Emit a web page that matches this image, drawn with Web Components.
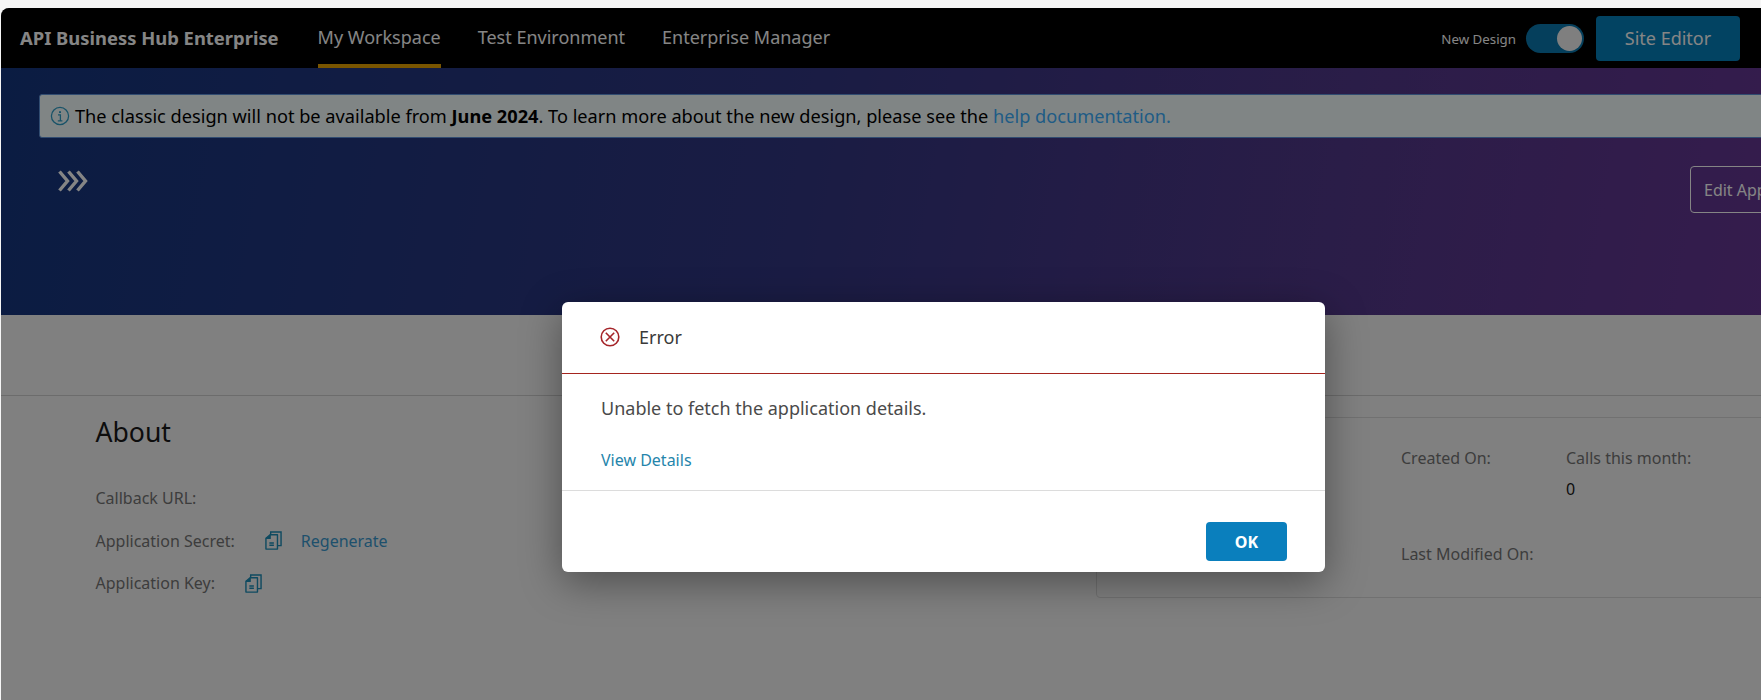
<!DOCTYPE html>
<html>
<head>
<meta charset="utf-8">
<title>API Business Hub Enterprise</title>
<style>
  html, body { margin: 0; height: 100%; overflow: hidden; background: #f6f6f6; }
  body { font-family: "Noto Sans", "Liberation Sans", sans-serif; }
</style>
</head>
<body>
<hub-app>
  <hub-header slot="header"></hub-header>
  <hub-hero slot="hero"></hub-hero>
  <hub-details slot="details"></hub-details>
  <error-dialog slot="dialog" title="Error" message="Unable to fetch the application details."></error-dialog>
</hub-app>

<script>
const COPY_ICON = `
  <svg viewBox="0 0 18 20" width="17" height="19" fill="none" stroke="currentColor" stroke-width="1.5" aria-hidden="true">
    <path d="M6 3.6V1h11v14.4h-3.4"/>
    <path d="M5.4 3.9h7.8v15.2H1V7.6z" stroke-linejoin="round"/>
    <path d="M5.4 3.9v3.7H1" fill="currentColor"/>
    <path d="M4.6 12.6h4.8M4.6 15h4.8"/>
  </svg>`;

class HubApp extends HTMLElement {
  constructor() {
    super();
    this.attachShadow({ mode: "open" });
  }

  connectedCallback() {
    this.shadowRoot.innerHTML = `
      <style>
        :host {
          display: block;
          margin: 8px 0 0 1px;
          height: 692px;
          position: relative;
          overflow: hidden;
          border-top-left-radius: 8px;
          background: #f6f6f6;
        }
        .shade {
          position: absolute;
          inset: 0;
          background: rgba(0,0,0,0.48);
        }
      </style>
      <slot name="header"></slot>
      <slot name="hero"></slot>
      <slot name="details"></slot>
      <div class="shade"></div>
      <slot name="dialog"></slot>
    `;
  }
}

class HubHeader extends HTMLElement {
  constructor() {
    super();
    this.attachShadow({ mode: "open" });
  }

  connectedCallback() {
    this.shadowRoot.innerHTML = `
      <style>
        :host {
          display: flex;
          align-items: stretch;
          height: 60px;
          background: #000;
          color: #fff;
          padding-left: 19px;
          padding-right: 21px;
          font-size: 18px;
        }
        .brand {
          font-weight: 700;
          font-size: 18.4px;
          align-self: center;
          margin-right: 39px;
          margin-top: -2px;
          color: #fff;
        }
        nav { display: flex; gap: 37px; }
        nav a {
          display: flex;
          align-items: center;
          padding-top: 2px;
          box-sizing: border-box;
          border-bottom: 4px solid transparent;
          color: #fff;
        }
        nav a.active { border-bottom-color: #e8a400; }
        .tools {
          margin-left: auto;
          display: flex;
          align-items: center;
        }
        .label { font-size: 13.3px; margin-right: 10px; margin-top: 1px; }
        .toggle {
          width: 58px;
          height: 29px;
          border-radius: 15px;
          background: #0a7ab0;
          position: relative;
          margin-right: 12px;
        }
        .toggle::after {
          content: "";
          position: absolute;
          top: 2px;
          right: 2px;
          width: 25px;
          height: 25px;
          border-radius: 50%;
          background: #f4f4f4;
        }
        .site {
          width: 144px;
          height: 45px;
          border: 0;
          border-radius: 4px;
          background: #0580bc;
          color: #fff;
          font: inherit;
          font-size: 18px;
        }
      </style>
      <div class="brand">API Business Hub Enterprise</div>
      <nav>
        <a class="active">My Workspace</a>
        <a>Test Environment</a>
        <a>Enterprise Manager</a>
      </nav>
      <div class="tools">
        <span class="label">New Design</span>
        <span class="toggle"></span>
        <button class="site">Site Editor</button>
      </div>
    `;
  }
}

class HubHero extends HTMLElement {
  constructor() {
    super();
    this.attachShadow({ mode: "open" });
  }

  connectedCallback() {
    this.shadowRoot.innerHTML = `
      <style>
        :host {
          display: block;
          height: 247px;
          box-sizing: border-box;
          width: 1900px;
          padding: 26px 0 0 38px;
          background: linear-gradient(100deg, #15367f 0%, #323682 42%, #52388a 70%, #663694 93%);
        }
        .notice {
          display: flex;
          align-items: center;
          height: 44px;
          box-sizing: border-box;
          border: 1px solid #5f92d8;
          border-radius: 3px;
          background: #f6ffff;
          color: #000;
          font-size: 18.2px;
          padding-left: 10px;
          padding-bottom: 1px;
          white-space: pre;
        }
        .notice svg { margin-right: 5px; color: #2f9fc8; flex: none; }
        .notice a { color: #3cb0ff; }
        .row {
          display: flex;
          align-items: flex-start;
          margin-top: 28px;
          padding-left: 19px;
        }
        .chevrons { color: #fff; margin-top: 4px; flex: none; }
        .edit {
          flex: none;
          margin-left: 1602px;
          height: 47px;
          width: 210px;
          border: 1px solid #fff;
          border-radius: 4px;
          background: transparent;
          color: #fff;
          font: inherit;
          font-size: 16px;
          text-align: left;
          padding-left: 13px;
        }
      </style>
      <div class="notice"><svg viewBox="0 0 20 20" width="20" height="20" fill="none" stroke="currentColor" stroke-width="1.3"><circle cx="10" cy="10" r="8.6"/><path d="M10 5.2v1.8" stroke-width="2"/><path d="M8 8.8h2.4v6M7.8 14.8h4.6"/></svg>The classic design will not be available from <b>June 2024</b>. To learn more about the new design, please see the <a>help documentation.</a></div>
      <div class="row">
        <svg class="chevrons" viewBox="0 0 30 22" width="30" height="22" fill="none" stroke="currentColor" stroke-width="3.4"><path d="M1.5 1.5l8 9.5-8 9.5M10.5 1.5l8 9.5-8 9.5M19.5 1.5l8 9.5-8 9.5"/></svg>
        <button class="edit">Edit Application</button>
      </div>
    `;
  }
}

class HubDetails extends HTMLElement {
  constructor() {
    super();
    this.attachShadow({ mode: "open" });
  }

  connectedCallback() {
    this.shadowRoot.innerHTML = `
      <style>
        :host {
          display: block;
          color: #1a1a1a;
          font-size: 16px;
        }
        .tabs { height: 80px; border-bottom: 1px solid #d0d0d0; width: 100%; }
        .body { display: flex; width: 1900px; }
        .about { width: 1095px; flex: none; padding: 18px 0 0 94.5px; box-sizing: border-box; }
        h2 { margin: 0 0 35px; font-size: 26.6px; font-weight: 400; line-height: 37px; color: #1a1a1a; }
        .row { display: flex; align-items: center; height: 24px; margin-bottom: 18.5px; color: #757575; white-space: pre; }
        .copy { color: #1d8eb8; display: flex; margin-left: 30px; }
        .regen { margin-left: 19px; color: #3a9ad0; }
        .card {
          margin-top: 21px;
          flex: 1;
          height: 181px;
          box-sizing: border-box;
          border: 1px solid #d9d9d9;
          border-radius: 4px 0 0 4px;
          padding: 28px 0 0 304px;
          color: #757575;
          display: grid;
          grid-template-columns: 165px 1fr;
          grid-template-rows: 96px 1fr;
        }
        .card div span { display: block; line-height: 24px; }
        .card .val { color: #1a1a1a; margin-top: 7px; }
      </style>
      <div class="tabs"></div>
      <div class="body">
        <section class="about">
          <h2>About</h2>
          <div class="row">Callback URL:</div>
          <div class="row">Application Secret:<span class="copy">${COPY_ICON}</span><span class="regen">Regenerate</span></div>
          <div class="row">Application Key:<span class="copy">${COPY_ICON}</span></div>
        </section>
        <section class="card">
          <div><span>Created On:</span></div>
          <div><span>Calls this month:</span><span class="val">0</span></div>
          <div><span>Last Modified On:</span></div>
        </section>
      </div>
    `;
  }
}

class ErrorDialog extends HTMLElement {
  constructor() {
    super();
    this.attachShadow({ mode: "open" });
  }

  connectedCallback() {
    this.shadowRoot.innerHTML = `
      <style>
        :host {
          position: absolute;
          left: 561px;
          top: 294px;
          width: 763px;
          height: 270px;
          display: flex;
          flex-direction: column;
          background: #fff;
          border-radius: 6px;
          box-shadow: 0 10px 40px rgba(0,0,0,0.4);
        }
        header {
          height: 72px;
          box-sizing: border-box;
          border-bottom: 1px solid #a5251f;
          display: flex;
          align-items: center;
          padding-left: 38px;
          padding-bottom: 2px;
          font-size: 18px;
          color: #3a3a3a;
        }
        header svg { margin-right: 19px; }
        .content { height: 117px; box-sizing: border-box; padding: 21px 0 0 39px; border-bottom: 1px solid #dcdcdc; }
        p { margin: 0 0 28px; font-size: 18px; line-height: 26px; color: #4a4a4a; }
        a { font-size: 16px; line-height: 22px; color: #2585ab; display: block; }
        footer { flex: 1; display: flex; justify-content: flex-end; align-items: flex-start; padding: 31px 38px 0 0; }
        button {
          width: 81px;
          height: 39px;
          border: 0;
          border-radius: 4px;
          background: #0a7fbd;
          color: #fff;
          font: inherit;
          font-size: 16px;
          font-weight: 700;
        }
      </style>
      <header>
        <svg viewBox="0 0 20 20" width="20" height="20" fill="none" stroke="#a5252a" stroke-width="1.6"><circle cx="10" cy="10" r="8.8"/><path d="M5.8 5.8l8.4 8.4M14.2 5.8l-8.4 8.4"/></svg>
        <span>${this.getAttribute("title")}</span>
      </header>
      <div class="content">
        <p>${this.getAttribute("message")}</p>
        <a>View Details</a>
      </div>
      <footer><button>OK</button></footer>
    `;
  }
}

customElements.define("hub-app", HubApp);
customElements.define("hub-header", HubHeader);
customElements.define("hub-hero", HubHero);
customElements.define("hub-details", HubDetails);
customElements.define("error-dialog", ErrorDialog);
</script>
</body>
</html>
